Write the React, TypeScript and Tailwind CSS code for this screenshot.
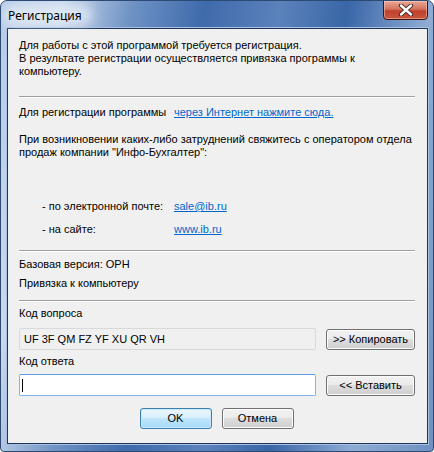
import React from "react";

const Sep = () => (
  <div className="ml-[11px] mr-[12px] h-[2px] border-t border-[#a0a0a0] border-b border-b-white" />
);

const Btn = ({ children, def, wide }: { children: React.ReactNode; def?: boolean; wide?: boolean }) => (
  <button
    className={
      "h-[21px] rounded-[3px] border text-[11px] leading-none text-black flex items-center justify-center whitespace-nowrap " +
      (wide ? "w-[89px] " : "w-[72px] ") +
      (def
        ? "border-[#3c7fb1] bg-[linear-gradient(to_bottom,#eaf6fd_0%,#d9f0fc_45%,#bee6fd_50%,#a7d9f5_100%)] shadow-[inset_0_0_0_1px_#c8eafc]"
        : "border-[#707070] bg-[linear-gradient(to_bottom,#f2f2f2_0%,#ebebeb_45%,#dddddd_50%,#cfcfcf_100%)] shadow-[inset_0_0_0_1px_#fcfcfc]")
    }
  >
    {children}
  </button>
);

export default function App() {
  return (
    <div
      className="w-[434px] h-[452px] rounded-t-[7px] rounded-b-[4px] border border-[#2d4a72] flex flex-col overflow-hidden bg-[linear-gradient(100deg,#b7cbe6_0%,#c9d8ec_12%,#6e92c4_26%,#3f6aab_40%,#5b82bb_55%,#3966a7_68%,#8eabd3_84%,#6f91c2_100%)]"
      style={{ fontFamily: '"Liberation Sans", Arial, sans-serif' }}
    >
      {/* title bar */}
      <div className="relative h-[27px] shrink-0 flex items-center">
        <div className="absolute left-[2px] top-[4px] w-[90px] h-[20px] rounded-full bg-[#e6eef8] opacity-80 blur-[6px]" />
        <span
          className="relative pl-[7px] pt-[2px] text-[12px] text-black"
          style={{ fontFamily: '"Noto Sans", "Open Sans", sans-serif' }}
        >
          Регистрация
        </span>
        <div className="absolute right-[5px] top-[-1px] w-[45px] h-[20px] rounded-b-[4px] border border-[#3f1410] bg-[linear-gradient(to_bottom,#e8a896_0%,#d4735f_45%,#c0402a_55%,#c9573f_100%)] shadow-[inset_0_0_0_1px_rgba(255,220,210,0.45)] flex items-center justify-center">
          <svg width="16" height="12" viewBox="0 0 16 12">
            <path d="M3 1.5 L13 10.5 M13 1.5 L3 10.5" stroke="#3a2020" strokeWidth="4.2" strokeLinecap="round" />
            <path d="M3 1.5 L13 10.5 M13 1.5 L3 10.5" stroke="#ffffff" strokeWidth="2.4" strokeLinecap="round" />
          </svg>
        </div>
      </div>

      {/* client */}
      <div className="ml-[6px] mr-[5px] mb-[7px] flex-1 border border-[#1e3559] shadow-[0_0_0_1px_#a9c2e3]">
        <div className="h-full bg-[#f0f0f0] pt-[10px] text-[11px] leading-[13px] text-black">
          <div className="pl-[11px]">
            <div>Для работы с этой программой требуется регистрация.</div>
            <div>В результате регистрации осуществляется привязка программы к</div>
            <div>компьютеру.</div>
          </div>
          <div className="mt-[18px]">
            <Sep />
          </div>
          <div className="pl-[11px] mt-[8px] flex">
            <span className="w-[155px]">Для регистрации программы</span>
            <span className="text-[#0066cc] underline">через Интернет нажмите сюда.</span>
          </div>
          <div className="pl-[11px] mt-[14px]">
            <div>При возникновении каких-либо затруднений свяжитесь с оператором отдела</div>
            <div>продаж компании "Инфо-Бухгалтер":</div>
          </div>
          <div className="pl-[34px] mt-[41px] flex">
            <span className="w-[132px]">- по электронной почте:</span>
            <span className="text-[#0066cc] underline">sale@ib.ru</span>
          </div>
          <div className="pl-[34px] mt-[10px] flex">
            <span className="w-[132px]">- на сайте:</span>
            <span className="text-[#0066cc] underline">www.ib.ru</span>
          </div>
          <div className="mt-[14px]">
            <Sep />
          </div>
          <div className="pl-[11px] mt-[6px]">Базовая версия: ОРН</div>
          <div className="pl-[11px] mt-[6px]">Привязка к компьютеру</div>
          <div className="mt-[10px]">
            <Sep />
          </div>
          <div className="pl-[11px] mt-[5px]">Код вопроса</div>
          <div className="pl-[11px] mt-[8px] flex items-center">
            <div className="w-[297px] h-[22px] rounded-[2px] border border-[#d9d9d9] bg-[#f0f0f0] pl-[4px] flex items-center">
              UF 3F QM FZ YF XU QR VH
            </div>
            <div className="ml-[10px]">
              <Btn wide>&gt;&gt; Копировать</Btn>
            </div>
          </div>
          <div className="pl-[11px] mt-[5px]">Код ответа</div>
          <div className="pl-[11px] mt-[6px] flex items-center">
            <div className="w-[297px] h-[22px] rounded-[2px] border border-[#7eb4ea] border-t-[#569de5] bg-white pl-[2px] flex items-center">
              <div className="w-px h-[13px] bg-black" />
            </div>
            <div className="ml-[10px]">
              <Btn wide>&lt;&lt; Вставить</Btn>
            </div>
          </div>
          <div className="mt-[12px] flex justify-center gap-[10px] pr-[2px]">
            <Btn def>OK</Btn>
            <Btn>Отмена</Btn>
          </div>
        </div>
      </div>
    </div>
  );
}
